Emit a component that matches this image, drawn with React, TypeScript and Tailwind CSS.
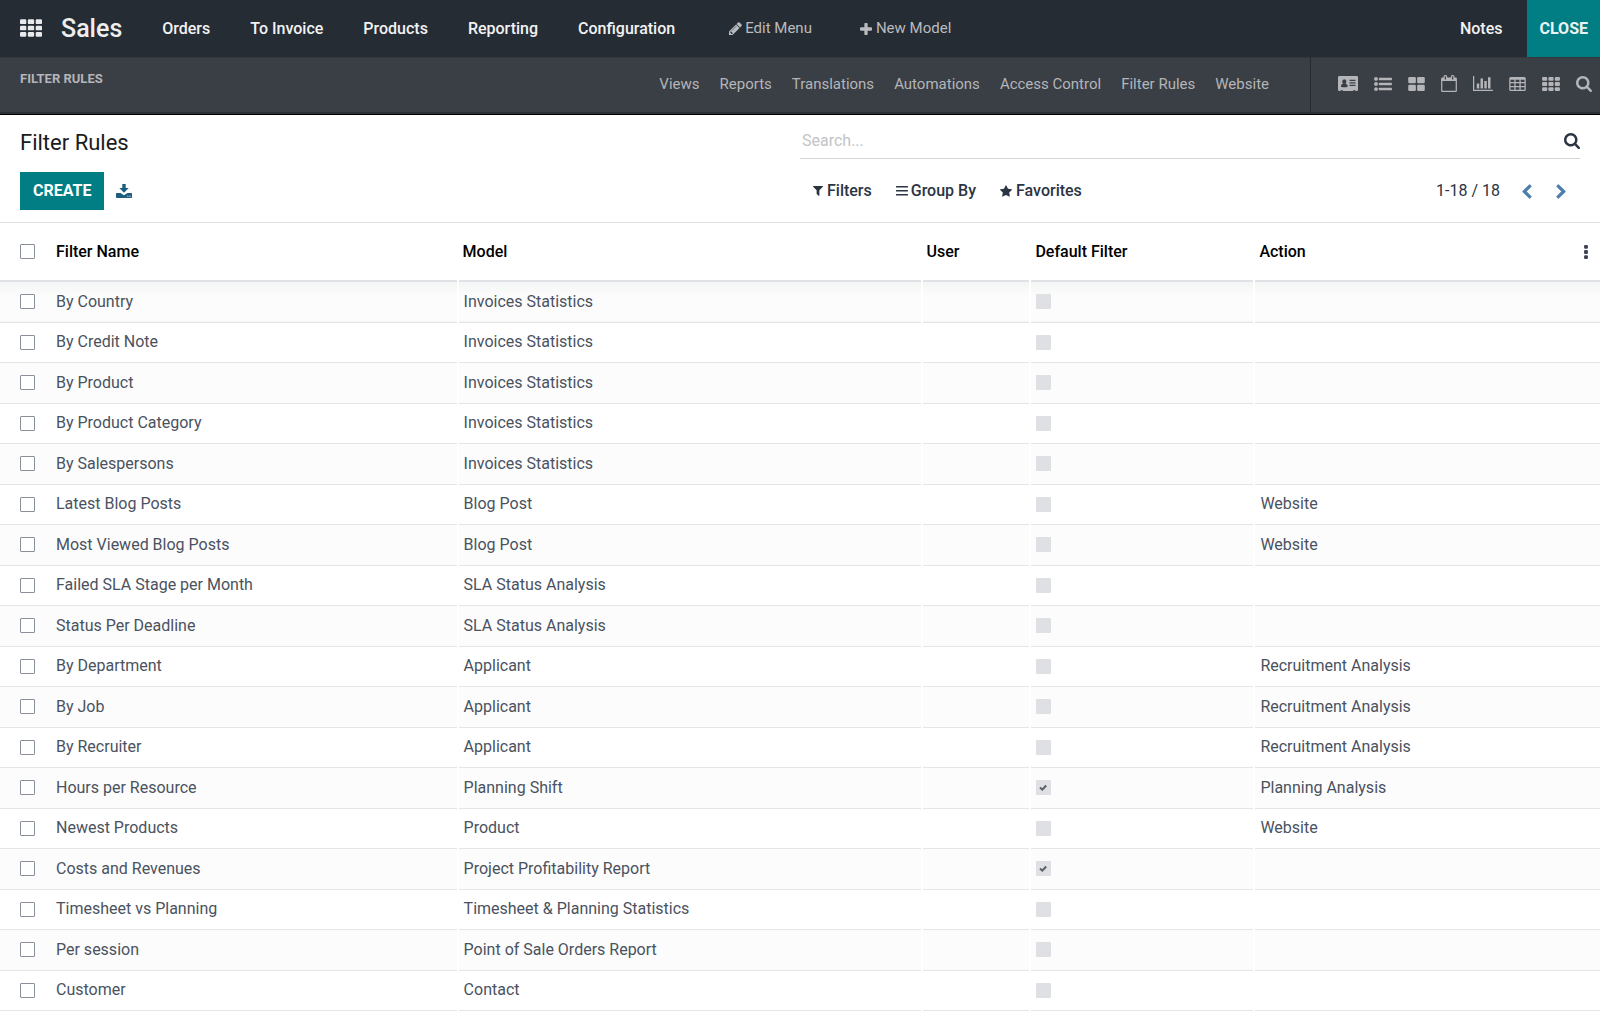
import React from "react";

type IconProps = { className?: string };

function Glyph({ box, className, children }: { box: string; className?: string; children: React.ReactNode }) {
  return (
    <svg viewBox={box} fill="currentColor" aria-hidden="true" className={className}>
      {children}
    </svg>
  );
}

const thCells = [0, 640, 1280].flatMap((x) => [0, 512, 1024].map((y) => [x, y]));

const ThIcon = ({ className }: IconProps) => (
  <Glyph box="0 0 1792 1408" className={className}>
    {thCells.map(([x, y]) => (
      <rect key={x + "-" + y} x={x} y={y} width="512" height="384" rx="96" />
    ))}
  </Glyph>
);

const ThLargeIcon = ({ className }: IconProps) => (
  <Glyph box="0 0 1664 1408" className={className}>
    <rect width="768" height="640" rx="128" />
    <rect x="896" width="768" height="640" rx="128" />
    <rect y="768" width="768" height="640" rx="128" />
    <rect x="896" y="768" width="768" height="640" rx="128" />
  </Glyph>
);

const SearchIcon = ({ className }: IconProps) => (
  <Glyph box="64 128 1664 1664" className={className}>
    <path d="M1216 832q0-185-131.5-316.5t-316.5-131.5-316.5 131.5-131.5 316.5 131.5 316.5 316.5 131.5 316.5-131.5 131.5-316.5zm512 832q0 52-38 90t-90 38q-54 0-90-38l-343-342q-179 124-399 124-143 0-273.5-55.5t-225-150-150-225-55.5-273.5 55.5-273.5 150-225 225-150 273.5-55.5 273.5 55.5 225 150 150 225 55.5 273.5q0 220-124 399l343 343q37 37 37 90z" />
  </Glyph>
);

const ChevronLeftIcon = ({ className }: IconProps) => (
  <Glyph box="384 0 1088 1664" className={className}>
    <path d="M1427 301l-531 531 531 531q19 19 19 45t-19 45l-166 166q-19 19-45 19t-45-19l-742-742q-19-19-19-45t19-45l742-742q19-19 45-19t45 19l166 166q19 19 19 45t-19 45z" />
  </Glyph>
);

const ChevronRightIcon = ({ className }: IconProps) => (
  <Glyph box="320 0 1088 1664" className={className}>
    <path d="M1363 877l-742 742q-19 19-45 19t-45-19l-166-166q-19-19-19-45t19-45l531-531-531-531q-19-19-19-45t19-45l166-166q19-19 45-19t45 19l742 742q19 19 19 45t-19 45z" />
  </Glyph>
);

const FilterIcon = ({ className }: IconProps) => (
  <Glyph box="192 256 1408 1408" className={className}>
    <path d="M1595 295q17 41-14 70l-493 493v742q0 42-39 59-13 5-25 5-27 0-45-19l-256-256q-19-19-19-45v-486l-493-493q-31-29-14-70 17-39 59-39h1280q42 0 59 39z" />
  </Glyph>
);

const StarIcon = ({ className }: IconProps) => (
  <Glyph box="64 32 1664 1600" className={className}>
    <path d="M1728 647q0 22-26 48l-363 354 86 500q1 7 1 20 0 21-10.5 35.5t-30.5 14.5q-19 0-40-12l-449-236-449 236q-22 12-40 12-21 0-31.5-14.5t-10.5-35.5q0-6 2-20l86-500-364-354q-25-27-25-48 0-37 56-46l502-73 225-455q19-41 49-41t49 41l225 455 502 73q56 9 56 46z" />
  </Glyph>
);

const PencilIcon = ({ className }: IconProps) => (
  <Glyph box="128 128 1536 1536" className={className}>
    <path d="M491 1536l91-91-235-235-91 91v107h128v128h107zm523-928q0-22-22-22-10 0-17 7l-542 542q-7 7-7 17 0 22 22 22 10 0 17-7l542-542q7-7 7-17zm-54-192l416 416-832 832h-416v-416zm683 96q0 53-37 90l-166 166-416-416 166-165q36-38 90-38 53 0 91 38l235 234q37 39 37 91z" />
  </Glyph>
);

const PlusIcon = ({ className }: IconProps) => (
  <Glyph box="0 0 1408 1408" className={className}>
    <rect x="512" width="384" height="1408" rx="96" />
    <rect y="512" width="1408" height="384" rx="96" />
  </Glyph>
);

const BarsIcon = ({ className }: IconProps) => (
  <Glyph box="0 0 12 10" className={className}>
    <rect width="12" height="1.600" rx=".4" />
    <rect y="4" width="12" height="1.600" rx=".4" />
    <rect y="8" width="12" height="1.600" rx=".4" />
  </Glyph>
);

const EllipsisIcon = ({ className }: IconProps) => (
  <Glyph box="0 0 384 1408" className={className}>
    <rect width="384" height="384" rx="96" />
    <rect y="512" width="384" height="384" rx="96" />
    <rect y="1024" width="384" height="384" rx="96" />
  </Glyph>
);

const ListIcon = ({ className }: IconProps) => (
  <Glyph box="0 0 1792 1408" className={className}>
    {[192, 704, 1216].map((y) => (
      <g key={y}>
        <circle cx="192" cy={y} r="192" />
        <rect x="480" y={y - 128} width="1312" height="256" rx="48" />
      </g>
    ))}
  </Glyph>
);

const CardIcon = ({ className }: IconProps) => (
  <Glyph box="0 0 20 15" className={className}>
    <path
      fillRule="evenodd"
      d="M1.3 0h17.4Q20 0 20 1.3v12.4q0 1.3-1.3 1.3h-1.2v-.8h-2.4v.8H5v-.8H2.500v.8H1.300Q0 15 0 13.700V1.300Q0 0 1.300 0zM6.300 3.200a2.200 2.300 0 0 0-2.100 2.400c0 .9.400 1.700 1 2.100-1.500.1-2.200 1-2.200 2.400 0 .8.500 1.200 1.200 1.200h4.200c.7 0 1.200-.4 1.200-1.200 0-1.400-.7-2.300-2.200-2.400.6-.4 1-1.200 1-2.100a2.200 2.300 0 0 0-2.100-2.400zM11.500 3.800v1.200h6V3.800zM11.500 6.300v1.200h6V6.300zM11.500 8.800v1.200h6V8.800z"
    />
  </Glyph>
);

const CalendarIcon = ({ className }: IconProps) => (
  <Glyph box="64 0 1664 1792" className={className}>
    <path d="M192 1664h1408v-1024h-1408v1024zm384-1216v-288q0-14-9-23t-23-9h-64q-14 0-23 9t-9 23v288q0 14 9 23t23 9h64q14 0 23-9t9-23zm768 0v-288q0-14-9-23t-23-9h-64q-14 0-23 9t-9 23v288q0 14 9 23t23 9h64q14 0 23-9t9-23zm384-64v1280q0 52-38 90t-90 38h-1408q-52 0-90-38t-38-90v-1280q0-52 38-90t90-38h128v-96q0-66 47-113t113-47h64q66 0 113 47t47 113v96h384v-96q0-66 47-113t113-47h64q66 0 113 47t47 113v96h128q52 0 90 38t38 90z" />
  </Glyph>
);

const ChartIcon = ({ className }: IconProps) => (
  <Glyph box="0 128 2048 1536" className={className}>
    <path d="M640 896v512h-256v-512h256zm384-512v1024h-256v-1024h256zm1024 1152v128h-2048v-1536h128v1408h1920zm-640-896v768h-256v-768h256zm384-384v1152h-256v-1152h256z" />
  </Glyph>
);

const TableIcon = ({ className }: IconProps) => (
  <Glyph box="0 0 1664 1408" className={className}>
    <path
      fillRule="evenodd"
      d="M160 0h1344q160 0 160 160v1088q0 160-160 160H160q-160 0-160-160V160Q0 0 160 0zM128 288v224h384V288zM640 288v224h384V288zM1152 288v224h384V288zM128 640v256h384V640zM640 640v256h384V640zM1152 640v256h384V640zM128 1024v256h384v-256zM640 1024v256h384v-256zM1152 1024v256h384v-256z"
    />
  </Glyph>
);

const ExportIcon = ({ className }: IconProps) => (
  <Glyph box="0 0 16 14" className={className}>
    <path d="M6.300 0h3.400v4h3L8 8.800 3.300 4h3z" />
    <path
      fillRule="evenodd"
      d="M.8 9h3.700L8 11.200 11.500 9h3.700q.8 0 .8.800v3.400q0 .8-.8.800H.8q-.8 0-.8-.800V9.800Q0 9 .8 9zM11.400 11.800v1h1v-1zM13.500 11.800v1h1v-1z"
    />
  </Glyph>
);

const menuItems = ["Orders", "To Invoice", "Products", "Reporting", "Configuration"];
const studioLinks = ["Views", "Reports", "Translations", "Automations", "Access Control", "Filter Rules", "Website"];

const viewButtons = [
  { label: "Form view", icon: <CardIcon className="h-[15px] w-5" /> },
  { label: "List view", icon: <ListIcon className="h-[14px] w-[18px]" /> },
  { label: "Kanban view", icon: <ThLargeIcon className="h-[14px] w-[17px]" /> },
  { label: "Calendar view", icon: <CalendarIcon className="h-[17px] w-4" /> },
  { label: "Graph view", icon: <ChartIcon className="h-[15px] w-5" /> },
  { label: "Pivot view", icon: <TableIcon className="h-[14px] w-[17px]" /> },
  { label: "Cohort view", icon: <ThIcon className="h-[14px] w-[18px]" /> },
  { label: "Search view", icon: <SearchIcon className="size-4" /> },
];

type Row = { name: string; model: string; isDefault?: boolean; action?: string };

const rows: Row[] = [
  { name: "By Country", model: "Invoices Statistics" },
  { name: "By Credit Note", model: "Invoices Statistics" },
  { name: "By Product", model: "Invoices Statistics" },
  { name: "By Product Category", model: "Invoices Statistics" },
  { name: "By Salespersons", model: "Invoices Statistics" },
  { name: "Latest Blog Posts", model: "Blog Post", action: "Website" },
  { name: "Most Viewed Blog Posts", model: "Blog Post", action: "Website" },
  { name: "Failed SLA Stage per Month", model: "SLA Status Analysis" },
  { name: "Status Per Deadline", model: "SLA Status Analysis" },
  { name: "By Department", model: "Applicant", action: "Recruitment Analysis" },
  { name: "By Job", model: "Applicant", action: "Recruitment Analysis" },
  { name: "By Recruiter", model: "Applicant", action: "Recruitment Analysis" },
  { name: "Hours per Resource", model: "Planning Shift", isDefault: true, action: "Planning Analysis" },
  { name: "Newest Products", model: "Product", action: "Website" },
  { name: "Costs and Revenues", model: "Project Profitability Report", isDefault: true },
  { name: "Timesheet vs Planning", model: "Timesheet & Planning Statistics" },
  { name: "Per session", model: "Point of Sale Orders Report" },
  { name: "Customer", model: "Contact" },
];

function SelectBox({ label }: { label: string }) {
  return (
    <input
      type="checkbox"
      aria-label={label}
      className="block size-[15px] appearance-none rounded-[1px] border border-[#8a8f9c] bg-white checked:bg-[#017e84]"
    />
  );
}

function DefaultBox({ label, checked }: { label: string; checked: boolean }) {
  return (
    <span className="relative block size-[15px]">
      <input
        type="checkbox"
        aria-label={label}
        checked={checked}
        disabled
        readOnly
        className="block size-[15px] appearance-none rounded-[1px] bg-[#dfe0e4]"
      />
      {checked && (
        <svg viewBox="0 0 15 15" className="absolute inset-0 size-[15px]" fill="none" stroke="#5b5f69" strokeWidth="2" aria-hidden="true">
          <path d="M4 7.500l2.300 2.200L10.200 5.500" />
        </svg>
      )}
    </span>
  );
}

function TopBar() {
  return (
    <header className="flex h-[57px] items-center bg-[#262c34] text-white">
      <button type="button" aria-label="Apps" className="ml-5 pb-[2px] text-[#e9eaeb]">
        <ThIcon className="h-[18px] w-[22px]" />
      </button>
      <a href="#" className="ml-[19px] text-[25px] leading-8 font-medium text-[#eeeeef]">Sales</a>
      <nav aria-label="Main" className="ml-10 flex gap-10 text-base font-medium text-[#f2f2f3]">
        {menuItems.map((item) => (
          <a key={item} href="#">{item}</a>
        ))}
      </nav>
      <div className="ml-[54px] flex gap-12 text-[15px] text-[#b9bbbe]">
        <button type="button" className="flex items-center gap-[3px]">
          <PencilIcon className="size-[13px]" />
          Edit Menu
        </button>
        <button type="button" className="flex items-center gap-1">
          <PlusIcon className="size-3" />
          New Model
        </button>
      </div>
      <a href="#" className="mr-[25px] ml-auto text-base font-medium text-[#f2f2f3]">Notes</a>
      <button type="button" className="h-full bg-[#017e84] px-3 text-base font-bold text-[#e9f3f3]">CLOSE</button>
    </header>
  );
}

function StudioBar() {
  return (
    <div className="flex h-[58px] border-b border-black bg-[#3a3e45] text-[#b4b5b8] shadow-[inset_0_-2px_0_#2c3037,inset_0_1px_0_#33373e]">
      <h2 className="mt-3 ml-5 flex-1 text-[13px] leading-5 font-bold">FILTER RULES</h2>
      <nav aria-label="Studio" className="flex items-center gap-5 pr-[41px] pb-[2px] text-[15px]">
        {studioLinks.map((item) => (
          <a key={item} href="#">{item}</a>
        ))}
      </nav>
      <div className="flex items-center gap-4 border-l border-[#262a31] pr-2 pb-1 pl-[27px]">
        {viewButtons.map(({ label, icon }) => (
          <button key={label} type="button" aria-label={label}>{icon}</button>
        ))}
      </div>
    </div>
  );
}

function ControlPanel() {
  return (
    <section className="grid grid-cols-2 border-b border-[#e2e3e5] px-5 pb-3 text-[#2b3443]">
      <h1 className="pt-3 text-[22px] leading-8 text-[#191b20]">Filter Rules</h1>
      <div className="flex h-11 items-center border-b border-[#d3d5d8] pt-2">
        <input
          type="text"
          aria-label="Search"
          placeholder="Search..."
          className="min-w-0 flex-1 bg-transparent pl-[2px] text-base placeholder:text-[#c3c4c7] focus:outline-none"
        />
        <button type="button" aria-label="Run search" className="text-[#2b3443]">
          <SearchIcon className="size-4" />
        </button>
      </div>
      <div className="mt-[13px] flex items-center gap-3">
        <button type="button" className="h-[38px] bg-[#017e84] px-[13px] text-base font-bold text-white">CREATE</button>
        <button type="button" aria-label="Export" className="text-[#1d5d80]">
          <ExportIcon className="h-[14px] w-4" />
        </button>
      </div>
      <div className="mt-[13px] flex items-center text-base">
        <div className="flex gap-6 pl-[13px] font-medium">
          <button type="button" className="flex items-center gap-1">
            <FilterIcon className="size-[10px]" />
            Filters
          </button>
          <button type="button" className="flex items-center gap-[3px]">
            <BarsIcon className="h-[10px] w-3" />
            Group By
          </button>
          <button type="button" className="flex items-center gap-1">
            <StarIcon className="size-3" />
            Favorites
          </button>
        </div>
        <span className="ml-auto">1-18 / 18</span>
        <div className="ml-[22px] flex gap-6 pr-[14px] text-[#4d7fae]">
          <button type="button" aria-label="Previous page">
            <ChevronLeftIcon className="h-[15px] w-[10px]" />
          </button>
          <button type="button" aria-label="Next page">
            <ChevronRightIcon className="h-[15px] w-[10px]" />
          </button>
        </div>
      </div>
    </section>
  );
}

function RulesTable() {
  return (
    <table className="w-full table-fixed border-collapse text-left text-base">
      <colgroup>
        <col className="w-[3%]" />
        <col className="w-[25.600%]" />
        <col className="w-[29%]" />
        <col className="w-[6.800%]" />
        <col className="w-[14%]" />
        <col />
        <col className="w-10" />
      </colgroup>
      <thead>
        <tr className="h-[58px] border-b-2 border-[#dfe1e5] text-black">
          <th className="pl-5"><SelectBox label="Select all" /></th>
          <th className="pl-2 font-medium">Filter Name</th>
          <th className="pl-[5px] font-medium">Model</th>
          <th className="pl-[5px] font-medium">User</th>
          <th className="pl-[5px] font-medium">Default Filter</th>
          <th className="pl-[5px] font-medium">Action</th>
          <th className="pr-3 text-[#3b4350]">
            <button type="button" aria-label="Optional columns" className="ml-auto block">
              <EllipsisIcon className="h-[14px] w-1" />
            </button>
          </th>
        </tr>
      </thead>
      <tbody className="text-[#4a5260]">
        {rows.map((row) => (
          <tr
            key={row.name}
            className="h-10 border-b border-[#e4e5e7] first:bg-linear-to-b odd:h-[41px] odd:bg-[#fcfcfc] first:from-[#f3f4f4] first:to-[#fcfcfc] first:to-40%"
          >
            <td className="pl-5"><SelectBox label={"Select " + row.name} /></td>
            <td className="border-r-2 border-white pl-2">{row.name}</td>
            <td className="border-r-2 border-white pl-[5px]">{row.model}</td>
            <td className="border-r-2 border-white" />
            <td className="border-r-2 border-white pl-[5px]">
              <DefaultBox label={row.name + " is default"} checked={!!row.isDefault} />
            </td>
            <td className="pl-[5px]" colSpan={2}>{row.action}</td>
          </tr>
        ))}
      </tbody>
    </table>
  );
}

export default function App() {
  return (
    <div className="min-h-screen bg-white font-[Roboto,sans-serif]">
      <TopBar />
      <StudioBar />
      <main>
        <ControlPanel />
        <RulesTable />
      </main>
    </div>
  );
}
